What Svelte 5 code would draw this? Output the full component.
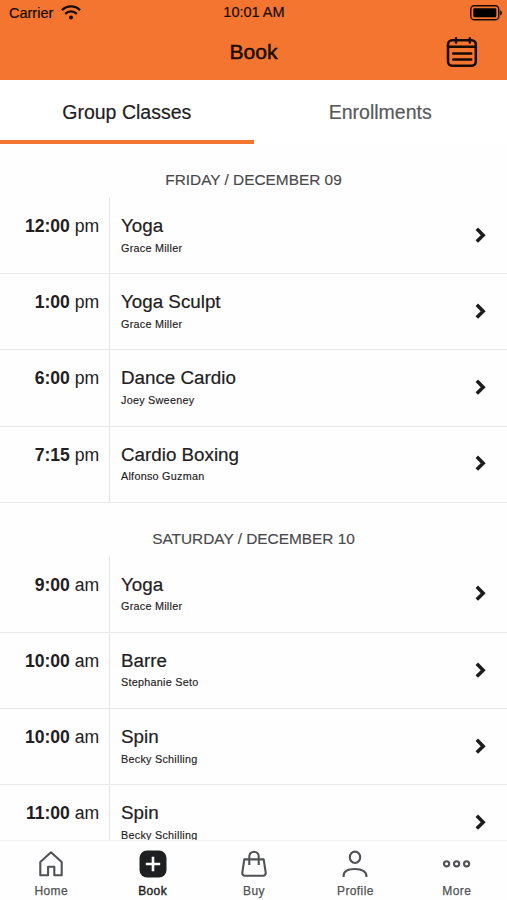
<script lang="ts">
	type ClassItem = {
		time: string;
		period: string;
		name: string;
		teacher: string;
	};

	type Day = {
		label: string;
		classes: ClassItem[];
	};

	const days: Day[] = [
		{
			label: 'FRIDAY / DECEMBER 09',
			classes: [
				{ time: '12:00', period: 'pm', name: 'Yoga', teacher: 'Grace Miller' },
				{ time: '1:00', period: 'pm', name: 'Yoga Sculpt', teacher: 'Grace Miller' },
				{ time: '6:00', period: 'pm', name: 'Dance Cardio', teacher: 'Joey Sweeney' },
				{ time: '7:15', period: 'pm', name: 'Cardio Boxing', teacher: 'Alfonso Guzman' }
			]
		},
		{
			label: 'SATURDAY / DECEMBER 10',
			classes: [
				{ time: '9:00', period: 'am', name: 'Yoga', teacher: 'Grace Miller' },
				{ time: '10:00', period: 'am', name: 'Barre', teacher: 'Stephanie Seto' },
				{ time: '10:00', period: 'am', name: 'Spin', teacher: 'Becky Schilling' },
				{ time: '11:00', period: 'am', name: 'Spin', teacher: 'Becky Schilling' }
			]
		}
	];

	const tabs = ['Group Classes', 'Enrollments'];
	const navItems = ['Home', 'Book', 'Buy', 'Profile', 'More'];

	let activeTab = $state('Group Classes');
	let activeNav = $state('Book');
</script>

<div class="app">
	<header class="header">
		<div class="status">
			<div class="status__carrier">
				<span>Carrier</span>
				<svg width="20" height="15" viewBox="0 0 20 15" fill="none" stroke="#160b05" stroke-width="2.3" aria-hidden="true">
					<path d="M.9 5.2c5.3-5 12.9-5 18.2 0" />
					<path d="M4.2 8.8c3.4-3.2 8.2-3.2 11.6 0" />
					<circle cx="10" cy="12.4" r="2" fill="#160b05" stroke="none" />
				</svg>
			</div>
			<span class="status__time">10:01 AM</span>
			<svg class="status__battery" width="33" height="16" viewBox="0 0 33 16" aria-hidden="true">
				<rect x=".8" y=".8" width="28" height="14" rx="3.6" fill="none" stroke="#160b05" stroke-width="1.4" />
				<rect x="3.3" y="3.3" width="23" height="9" rx="1.2" fill="#000" />
				<path d="M30.2 5.2c2.3.7 2.3 4.5 0 5.2z" fill="#160b05" />
			</svg>
		</div>
		<div class="title-bar">
			<h1>Book</h1>
			<button class="calendar" aria-label="Calendar">
				<svg width="32" height="32" viewBox="0 0 32 32" fill="none" stroke="#160b05" stroke-width="2.5" stroke-linecap="round">
					<rect x="2" y="4.2" width="27.8" height="25.6" rx="4.2" />
					<path d="M2 10.8h27.8M10 2.2v4.4M23.8 2.2v4.4M7.2 17.4h18M7.2 23.4h18" />
				</svg>
			</button>
		</div>
	</header>

	<div class="tabs" role="tablist">
		{#each tabs as tab}
			<button
				class="tab"
				class:tab--active={activeTab === tab}
				role="tab"
				aria-selected={activeTab === tab}
				onclick={() => (activeTab = tab)}
			>
				{tab}
			</button>
		{/each}
	</div>

	<main class="schedule">
		{#each days as day}
			<h2 class="day">{day.label}</h2>
			{#each day.classes as item}
				<div class="row">
					<div class="row__time"><b>{item.time}</b> {item.period}</div>
					<div class="row__info">
						<div class="row__name">{item.name}</div>
						<div class="row__teacher">{item.teacher}</div>
					</div>
					<svg class="row__chevron" width="12" height="18" viewBox="0 0 12 18" fill="none" stroke="#1c1c1e" stroke-width="3.5" aria-hidden="true">
						<path d="m1.8 2.8 6.4 6.4-6.4 6.4" />
					</svg>
				</div>
			{/each}
		{/each}
	</main>

	<nav class="nav">
		{#each navItems as item}
			<button class="nav__item" class:nav__item--active={activeNav === item} onclick={() => (activeNav = item)}>
				<svg width="28" height="28" viewBox="0 0 28 28" fill="none" stroke="#505255" stroke-width="2.1" aria-hidden="true">
					{#if item === 'Home'}
						<path d="M3.3 12 14 2.3 24.7 12v13.2h-7.4v-8.4h-6.2v8.4H3.3z" stroke-linejoin="round" />
					{:else if item === 'Book'}
						<rect x=".5" y=".5" width="27" height="27" rx="7.5" fill="#1d1f22" stroke="none" />
						<path d="M14 6.8v14.4M6.8 14h14.4" stroke="#fff" stroke-width="2.6" />
					{:else if item === 'Buy'}
						<path d="M4.3 9.4h19.4l2 13.3a2.6 2.6 0 0 1-2.6 3H4.9a2.6 2.6 0 0 1-2.6-3z" stroke-linejoin="round" />
						<path d="M9.3 15V6.4a4.7 4.7 0 0 1 9.4 0V15" />
					{:else if item === 'Profile'}
						<ellipse cx="14" cy="7.3" rx="5.2" ry="5.7" />
						<path d="M2.6 27v-1.2C2.6 21.5 7 19 14 19s11.4 2.5 11.4 6.8V27" />
					{:else}
						<circle cx="3.6" cy="13.8" r="2.6" />
						<circle cx="13.6" cy="13.8" r="2.6" />
						<circle cx="23.6" cy="13.8" r="2.6" />
					{/if}
				</svg>
				<span>{item}</span>
			</button>
		{/each}
	</nav>
</div>

<style>
	:global(body) {
		margin: 0;
		background: #fff;
	}

	.app {
		display: flex;
		flex-direction: column;
		width: 507px;
		height: 900px;
		overflow: hidden;
		background: #fefefe;
		color: #1f2023;
		font-family: 'Liberation Sans', Arial, sans-serif;
	}

	button {
		padding: 0;
		border: 0;
		background: none;
		color: inherit;
		font: inherit;
		cursor: pointer;
	}

	.header {
		flex: none;
		height: 80px;
		background: #f47530;
		color: #160b05;
	}

	.status {
		display: grid;
		grid-template-columns: 1fr auto 1fr;
		align-items: center;
		height: 25px;
		padding: 0 4px 0 9px;
		font-size: 14.5px;
		-webkit-text-stroke: 0.2px;
	}

	.status__carrier {
		display: flex;
		align-items: center;
		gap: 8px;
	}

	.status__time {
		padding: 0 4px 2px 0;
	}

	.status__battery {
		justify-self: end;
	}

	.title-bar {
		display: grid;
		grid-template-columns: 1fr auto 1fr;
		align-items: center;
		height: 54px;
		padding: 0 29px;
	}

	h1 {
		grid-column: 2;
		margin: 0;
		font-size: 21px;
		font-weight: 400;
		-webkit-text-stroke: 0.5px;
	}

	.calendar {
		display: flex;
		justify-self: end;
	}

	.tabs {
		display: flex;
		flex: none;
		height: 64px;
		background: #fff;
	}

	.tab {
		box-sizing: border-box;
		flex: 1;
		border-top: 4px solid transparent;
		border-bottom: 4px solid transparent;
		color: #57595d;
		font-size: 19.5px;
		-webkit-text-stroke: 0.2px;
	}

	.tab--active {
		border-bottom-color: #f47530;
		color: #1f2023;
	}

	.schedule {
		flex: 1;
		min-height: 0;
		overflow: hidden;
	}

	.day {
		height: 54px;
		margin: 0;
		color: #48494c;
		font-size: 15.4px;
		font-weight: 400;
		line-height: 72px;
		text-align: center;
		-webkit-text-stroke: 0.15px;
	}

	.row {
		box-sizing: border-box;
		display: flex;
		height: 76.2px;
		border-bottom: 1px solid #e9e9ea;
	}

	.row__time {
		box-sizing: border-box;
		flex: none;
		width: 110px;
		padding: 18px 10px 0 0;
		border-right: 1px solid #e4e4e6;
		font-size: 17.6px;
		line-height: 20px;
		letter-spacing: -0.05px;
		text-align: right;
	}

	.row__info {
		flex: 1;
		padding: 17px 0 0 11px;
	}

	.row__name {
		font-size: 18.8px;
		line-height: 22px;
		-webkit-text-stroke: 0.2px;
	}

	.row__teacher {
		margin-top: 3.5px;
		font-size: 10.8px;
		line-height: 14px;
		letter-spacing: 0.26px;
		-webkit-text-stroke: 0.15px;
	}

	.row__chevron {
		align-self: center;
		margin: 0 20px 2px 0;
	}

	.nav {
		box-sizing: border-box;
		display: flex;
		flex: none;
		height: 60px;
		border-top: 1px solid #f3f3f4;
		background: #fefefe;
	}

	.nav__item {
		display: flex;
		flex: 1;
		flex-direction: column;
		align-items: center;
		gap: 6px;
		padding: 9px 0 0 1px;
		color: #505255;
		font-size: 12px;
		line-height: 15px;
		letter-spacing: 0.4px;
		-webkit-text-stroke: 0.25px;
	}

	.nav__item--active {
		color: #1d1f22;
		-webkit-text-stroke: 0.4px;
	}
</style>
